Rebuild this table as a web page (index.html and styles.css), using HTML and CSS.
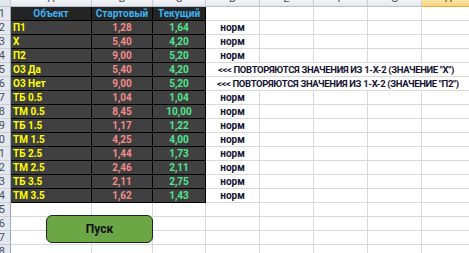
FILE: index.html
```html
<!DOCTYPE html>
<html>
<head>
  <meta charset="utf-8">
  <title>Контроль значений</title>
  <link rel="stylesheet" href="styles.css">
</head>
<body>
  <div class="sheet">
    <div class="col-head corner"></div>
    <div class="col-head">A</div>
    <div class="col-head">B</div>
    <div class="col-head">C</div>
    <div class="col-head">D</div>
    <div class="col-head">E</div>
    <div class="col-head">F</div>
    <div class="col-head">G</div>
    <div class="col-head active">H</div>

    <div class="row-head"><span>1</span></div>
    <div class="cell dark head">Объект</div>
    <div class="cell dark head">Стартовый</div>
    <div class="cell dark head">Текущий</div>
    <div class="cell"></div><div class="cell"></div><div class="cell"></div><div class="cell"></div><div class="cell"></div>

    <div class="row-head"><span>2</span></div>
    <div class="cell dark obj">П1</div>
    <div class="cell dark start">1,28</div>
    <div class="cell dark cur">1,64</div>
    <div class="cell note">норм</div>
    <div class="cell"></div><div class="cell"></div><div class="cell"></div><div class="cell"></div>

    <div class="row-head"><span>3</span></div>
    <div class="cell dark obj">Х</div>
    <div class="cell dark start">5,40</div>
    <div class="cell dark cur">4,20</div>
    <div class="cell note">норм</div>
    <div class="cell"></div><div class="cell"></div><div class="cell"></div><div class="cell"></div>

    <div class="row-head"><span>4</span></div>
    <div class="cell dark obj">П2</div>
    <div class="cell dark start">9,00</div>
    <div class="cell dark cur">5,20</div>
    <div class="cell note">норм</div>
    <div class="cell"></div><div class="cell"></div><div class="cell"></div><div class="cell"></div>

    <div class="row-head"><span>5</span></div>
    <div class="cell dark obj">О3 Да</div>
    <div class="cell dark start">5,40</div>
    <div class="cell dark cur">4,20</div>
    <div class="cell warn">&lt;&lt;&lt; ПОВТОРЯЮТСЯ ЗНАЧЕНИЯ ИЗ 1-Х-2 (ЗНАЧЕНИЕ "Х")</div>

    <div class="row-head"><span>6</span></div>
    <div class="cell dark obj">О3 Нет</div>
    <div class="cell dark start">9,00</div>
    <div class="cell dark cur">5,20</div>
    <div class="cell warn shifted">&lt;&lt;&lt; ПОВТОРЯЮТСЯ ЗНАЧЕНИЯ ИЗ 1-Х-2 (ЗНАЧЕНИЕ "П2")</div>

    <div class="row-head"><span>7</span></div>
    <div class="cell dark obj">ТБ 0.5</div>
    <div class="cell dark start">1,04</div>
    <div class="cell dark cur">1,04</div>
    <div class="cell note">норм</div>
    <div class="cell"></div><div class="cell"></div><div class="cell"></div><div class="cell"></div>

    <div class="row-head"><span>8</span></div>
    <div class="cell dark obj">ТМ 0.5</div>
    <div class="cell dark start">8,45</div>
    <div class="cell dark cur">10,00</div>
    <div class="cell note">норм</div>
    <div class="cell"></div><div class="cell"></div><div class="cell"></div><div class="cell"></div>

    <div class="row-head"><span>9</span></div>
    <div class="cell dark obj">ТБ 1.5</div>
    <div class="cell dark start">1,17</div>
    <div class="cell dark cur">1,22</div>
    <div class="cell note">норм</div>
    <div class="cell"></div><div class="cell"></div><div class="cell"></div><div class="cell"></div>

    <div class="row-head"><span>10</span></div>
    <div class="cell dark obj">ТМ 1.5</div>
    <div class="cell dark start">4,25</div>
    <div class="cell dark cur">4,00</div>
    <div class="cell note">норм</div>
    <div class="cell"></div><div class="cell"></div><div class="cell"></div><div class="cell"></div>

    <div class="row-head"><span>11</span></div>
    <div class="cell dark obj">ТБ 2.5</div>
    <div class="cell dark start">1,44</div>
    <div class="cell dark cur">1,73</div>
    <div class="cell note">норм</div>
    <div class="cell"></div><div class="cell"></div><div class="cell"></div><div class="cell"></div>

    <div class="row-head"><span>12</span></div>
    <div class="cell dark obj">ТМ 2.5</div>
    <div class="cell dark start">2,46</div>
    <div class="cell dark cur">2,11</div>
    <div class="cell note">норм</div>
    <div class="cell"></div><div class="cell"></div><div class="cell"></div><div class="cell"></div>

    <div class="row-head"><span>13</span></div>
    <div class="cell dark obj">ТБ 3.5</div>
    <div class="cell dark start">2,11</div>
    <div class="cell dark cur">2,75</div>
    <div class="cell note">норм</div>
    <div class="cell"></div><div class="cell"></div><div class="cell"></div><div class="cell"></div>

    <div class="row-head"><span>14</span></div>
    <div class="cell dark obj">ТМ 3.5</div>
    <div class="cell dark start">1,62</div>
    <div class="cell dark cur">1,43</div>
    <div class="cell note">норм</div>
    <div class="cell"></div><div class="cell"></div><div class="cell"></div><div class="cell"></div>

    <div class="row-head"><span>15</span></div>
    <div class="cell"></div><div class="cell"></div><div class="cell"></div><div class="cell"></div>
    <div class="cell"></div><div class="cell"></div><div class="cell"></div><div class="cell"></div>

    <div class="row-head"><span>16</span></div>
    <div class="cell"></div><div class="cell"></div><div class="cell"></div><div class="cell"></div>
    <div class="cell"></div><div class="cell"></div><div class="cell"></div><div class="cell"></div>

    <div class="row-head"><span>17</span></div>
    <div class="cell"></div><div class="cell"></div><div class="cell"></div><div class="cell"></div>
    <div class="cell"></div><div class="cell"></div><div class="cell"></div><div class="cell"></div>

    <div class="row-head"><span>18</span></div>
    <div class="cell"></div><div class="cell"></div><div class="cell"></div><div class="cell"></div>
    <div class="cell"></div><div class="cell"></div><div class="cell"></div><div class="cell"></div>

    <button class="run-btn" type="button">Пуск</button>
  </div>
</body>
</html>
```

FILE: styles.css
```css
* {
  box-sizing: border-box;
}

body {
  margin: 0;
  background-color: #FFFFFF;
  font-family: Roboto, "Liberation Sans", sans-serif;
  overflow: hidden;
}

.sheet {
  position: relative;
  display: grid;
  grid-template-columns: 11px 81px 61px 53px 54px 54px 54px 54px 54px;
  grid-template-rows: 7px;
  grid-auto-rows: 14px;
}

/* column letters, scrolled so only their lower half shows */
.col-head {
  display: flex;
  justify-content: center;
  align-items: flex-end;
  overflow: hidden;
  background: linear-gradient(#f3f5f8, #e3e7ec);
  border-right: 1px solid #c9ced6;
  border-bottom: 1px solid #b9c2cc;
  color: #4b4f55;
  font-size: 11px;
  line-height: 11px;
  padding-bottom: 2px;
}

.col-head.corner {
  background: #e3e7ec;
}

.col-head.active {
  background: linear-gradient(#fbe6a6, #f7d27a);
  border-bottom: 1px solid #f2a33b;
  color: #6b4c10;
}

/* row numbers, clipped on the left like a scrolled sheet */
.row-head {
  display: flex;
  justify-content: flex-end;
  align-items: center;
  overflow: hidden;
  background-color: #e4e8ee;
  border-right: 1px solid #9eaab8;
  border-bottom: 1px solid #c9ced6;
  color: #46505c;
  font-size: 11px;
  padding-right: 5px;
}

.cell {
  display: flex;
  align-items: center;
  border-right: 1px solid #d9d9d9;
  border-bottom: 1px solid #d9d9d9;
  font-size: 10px;
  font-weight: bold;
  white-space: nowrap;
}

.dark {
  background-color: #404040;
  border-right-color: #000000;
  border-bottom-color: #000000;
}

.dark.head {
  background-color: #242424;
  color: #3cb2f2;
  justify-content: center;
}

.obj {
  color: #ffff00;
  padding-left: 2px;
}

.start {
  color: #f48b8b;
  justify-content: center;
}

.cur {
  color: #52e58f;
  justify-content: center;
}

.note {
  color: #141432;
  justify-content: center;
}

/* warning text runs over the empty cells to its right */
.warn {
  grid-column: span 5;
  color: #141432;
  font-size: 9.5px;
  letter-spacing: -0.35px;
  padding-left: 12px;
}

.warn.shifted {
  padding-left: 11px;
}

.run-btn {
  position: absolute;
  left: 46px;
  top: 215px;
  width: 107px;
  height: 28px;
  background-color: #6ca746;
  border: 1px solid #232323;
  border-radius: 6px;
  font-family: Roboto, "Liberation Sans", sans-serif;
  font-size: 12px;
  font-weight: bold;
  color: #111111;
  cursor: pointer;
}
```
